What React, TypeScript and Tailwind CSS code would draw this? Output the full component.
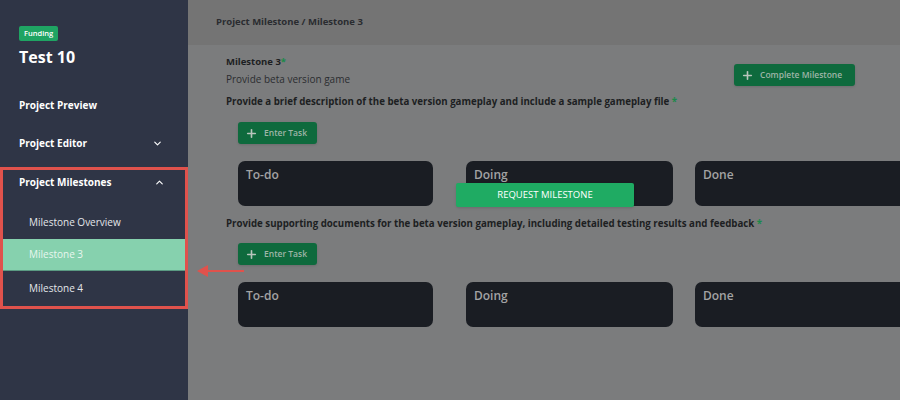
import { ChevronDown, ChevronUp, Plus } from 'lucide-react';

const Column = ({ label, w }: { label: string; w: string }) => (
  <div className={`${w} h-[45px] shrink-0 rounded-[7px] bg-[#1a1d23] px-2 pt-[5px] text-[12px] font-semibold text-[#a3a3a3]`}>
    {label}
  </div>
);

const EnterTask = () => (
  <button className="flex h-[22px] w-[79px] items-center gap-[6px] rounded-[3px] bg-[#0e6a3d] pl-[7px] text-[8.5px] font-semibold text-[#9fb5a8] shadow">
    <Plus size={13} strokeWidth={3} className="text-[#b9c5bd]" />
    Enter Task
  </button>
);

const Board = ({ overlay }: { overlay?: boolean }) => (
  <div className="relative flex h-[45px] pl-3">
    <Column label="To-do" w="w-[195px]" />
    <div className="w-[33px] shrink-0" />
    <Column label="Doing" w="w-[207px]" />
    <div className="w-[22px] shrink-0" />
    <Column label="Done" w="w-[220px]" />
    {overlay && (
      <button className="absolute left-[230px] top-[22px] h-[24px] w-[178px] rounded-[2px] bg-[#1fab63] text-[9.5px] font-medium text-white shadow">
        REQUEST MILESTONE
      </button>
    )}
  </div>
);

export default function App() {
  return (
    <div className="flex h-[400px] w-[900px] overflow-hidden font-['Open_Sans',sans-serif]">
      <aside className="relative w-[188px] shrink-0 bg-[#2f3546] text-white">
        <div className="px-[19px] pt-[26px]">
          <div className="w-fit rounded-[2px] bg-[#1fa463] px-[5px] py-[2px] text-[7.5px] font-semibold leading-[11px]">
            Funding
          </div>
          <div className="mt-[6px] text-[16px] font-bold leading-[20px]">Test 10</div>
        </div>
        <nav className="mt-[19px] text-[10px] font-bold">
          <div className="flex h-[38px] items-center px-[19px]">Project Preview</div>
          <div className="flex h-[38px] items-center justify-between pl-[19px] pr-[25px]">
            Project Editor
            <ChevronDown size={11} strokeWidth={2.5} />
          </div>
          <div className="mt-[5px] border-[3px] border-[#e0524c]">
            <div className="flex h-[24px] items-center justify-between pl-[16px] pr-[20px]">
              Project Milestones
              <ChevronUp size={11} strokeWidth={2.5} />
            </div>
            <div className="flex h-[45px] items-center pl-[26px] pt-[11px] text-[10px] font-normal text-[#e4e6ea]">
              Milestone Overview
            </div>
            <div className="flex h-[32px] items-center border-b border-[#5a9a82] bg-[#86d1ae] pl-[26px] text-[10px] font-normal text-[#e8f6ef]">
              Milestone 3
            </div>
            <div className="flex h-[35px] items-center pl-[26px] text-[10px] font-normal text-[#e4e6ea]">
              Milestone 4
            </div>
          </div>
        </nav>
      </aside>

      <main className="relative flex-1 bg-[#7b7c7d] text-[#1d1f22]">
        <header className="flex h-[45px] items-center bg-[#747474] px-7 text-[9.5px] font-bold text-[#2a2c30]">
          Project Milestone / Milestone 3
        </header>
        <div className="px-[38px] pt-[10px]">
          <div className="flex items-start justify-between pr-[60px]">
            <div>
              <div className="text-[9.5px] font-bold leading-[14px]">
                Milestone 3<span className="text-[#1a8a4a]">*</span>
              </div>
              <div className="mt-[3px] text-[10px] leading-[14px] text-[#2b2d30]">Provide beta version game</div>
            </div>
            <button className="mt-[9px] flex h-[22px] w-[121px] items-center gap-[6px] rounded-[3px] bg-[#0e6a3d] pl-[7px] text-[8.5px] font-semibold text-[#9fb5a8] shadow">
              <Plus size={13} strokeWidth={3} className="text-[#b9c5bd]" />
              Complete Milestone
            </button>
          </div>
          <div className="mt-[9px] text-[9.7px] font-bold leading-[14px]">
            Provide a brief description of the beta version gameplay and include a sample gameplay file{' '}
            <span className="text-[#1a8a4a]">*</span>
          </div>
          <div className="mt-[13px] pl-3">
            <EnterTask />
          </div>
          <div className="mt-[17px]">
            <Board overlay />
          </div>
          <div className="mt-[11px] text-[9.7px] font-bold leading-[14px]">
            Provide supporting documents for the beta version gameplay, including detailed testing results and feedback{' '}
            <span className="text-[#1a8a4a]">*</span>
          </div>
          <div className="mt-[12px] pl-3">
            <EnterTask />
          </div>
          <div className="mt-[17px]">
            <Board />
          </div>
        </div>
      </main>

      <svg className="absolute left-[196px] top-[264px]" width="50" height="14" viewBox="0 0 50 14">
        <line x1="8" y1="7" x2="48" y2="7" stroke="#e0524c" strokeWidth="2" />
        <path d="M1 7 L12 1 L12 13 Z" fill="#e0524c" />
      </svg>
    </div>
  );
}
